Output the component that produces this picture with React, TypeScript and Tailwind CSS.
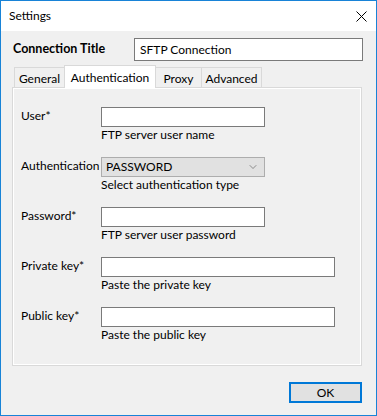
import { ChevronDown } from "lucide-react";

interface Field {
  label: string;
  hint: string;
  kind: "text" | "select";
  wide?: boolean;
  value?: string;
}

const fields: Field[] = [
  { label: "User*", hint: "FTP server user name", kind: "text" },
  { label: "Authentication", hint: "Select authentication type", kind: "select", value: "PASSWORD" },
  { label: "Password*", hint: "FTP server user password", kind: "text" },
  { label: "Private key*", hint: "Paste the private key", kind: "text", wide: true },
  { label: "Public key*", hint: "Paste the public key", kind: "text", wide: true },
];

const tabs = ["General", "Authentication", "Proxy", "Advanced"];

export default function App() {
  return (
    <div
      className="w-[377px] h-[416px] border border-[#1883d7] bg-[#f0f0f0] flex flex-col text-[12px] text-black overflow-hidden"
      style={{ fontFamily: '"Segoe UI", Lato, "Noto Sans", sans-serif' }}
    >
      {/* Title bar */}
      <div className="h-[30px] bg-white flex items-center justify-between pl-[8px] pr-[9px] shrink-0">
        <span className="leading-none">Settings</span>
        <svg width="11" height="11" viewBox="0 0 11 11" className="text-black">
          <path d="M0.5 0.5 L10.5 10.5 M10.5 0.5 L0.5 10.5" stroke="currentColor" strokeWidth="1" />
        </svg>
      </div>

      <div className="flex flex-col px-[11px]">
        {/* Connection title */}
        <div className="flex items-center mt-[7px] h-[23px]">
          <span className="w-[122px] font-bold text-[12.5px] leading-none pl-[1px]">Connection Title</span>
          <div className="w-[229px] h-[23px] bg-white border border-[#7a7a7a] flex items-center px-[5px] text-[12px]">
            SFTP Connection
          </div>
        </div>

        {/* Tabs */}
        <div className="flex items-end mt-[4px] h-[22px] pl-[2px] relative z-10">
          {tabs.map((t) =>
            t === "Authentication" ? (
              <div
                key={t}
                className="h-[23px] w-[92px] bg-white border border-b-0 border-[#d9d9d9] flex items-start justify-center pt-[3px] -mb-[1px]"
              >
                {t}
              </div>
            ) : (
              <div
                key={t}
                className={`h-[20px] bg-[#f0f0f0] border border-b-0 border-[#d9d9d9] flex items-center justify-center pt-[2px] ${
                  t === "General" ? "w-[50px] border-r-0" : t === "Proxy" ? "w-[46px] border-l-0" : "w-[60px] border-l-0"
                }`}
              >
                {t}
              </div>
            )
          )}
        </div>

        {/* Panel */}
        <div className="w-[350px] h-[279px] border border-[#d9d9d9] bg-[#f0f0f0] shadow-[inset_0_0_0_1px_#ffffff] pt-[19px] pl-[8px] flex flex-col gap-[14px]">
          {fields.map((f) => (
            <div key={f.label} className="flex">
              <div className="w-[80px] leading-[16px] pt-[1px]">{f.label}</div>
              <div className="flex flex-col">
                {f.kind === "select" ? (
                  <div className="w-[164px] h-[20px] bg-[#e1e1e1] border border-[#adadad] flex items-center justify-between pl-[4px] pr-[5px]">
                    <span>{f.value}</span>
                    <ChevronDown size={12} strokeWidth={1} className="text-[#333]" />
                  </div>
                ) : (
                  <div
                    className={`${f.wide ? "w-[234px]" : "w-[164px]"} h-[20px] bg-white border border-[#7a7a7a]`}
                  />
                )}
                <div className="leading-[16px]">{f.hint}</div>
              </div>
            </div>
          ))}
        </div>

        {/* Footer */}
        <div className="flex justify-end mt-[16px] pr-[3px]">
          <button className="w-[73px] h-[21px] bg-[#e1e1e1] border-2 border-[#0078d7] flex items-center justify-center leading-none">
            OK
          </button>
        </div>
      </div>
    </div>
  );
}
